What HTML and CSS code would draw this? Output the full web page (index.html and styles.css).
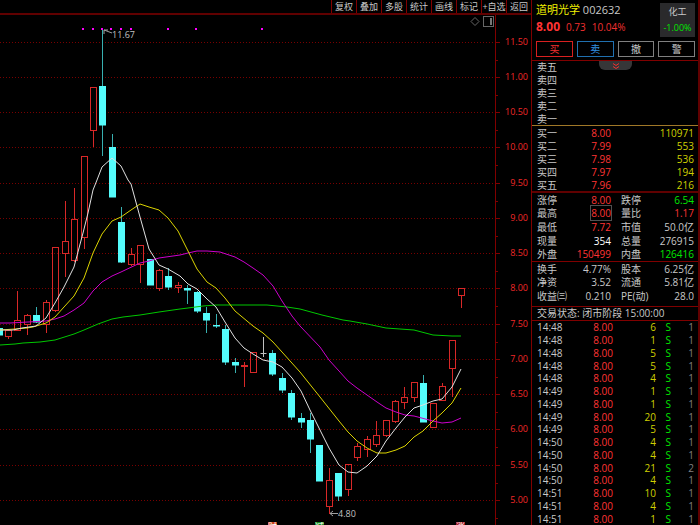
FILE: index.html
```html
<!DOCTYPE html>
<html lang="zh-CN">
<head>
    <meta charset="UTF-8">
    <meta name="viewport" content="width=device-width, initial-scale=1.0">
    <title>道明光学 002632</title>
    <link rel="stylesheet" href="styles.css">
</head>
<body>
    <main class="chart-pane">
        <nav class="toolbar">
            <button>复权</button>
            <button>叠加</button>
            <button>多股</button>
            <button>统计</button>
            <button>画线</button>
            <button>标记</button>
            <button>+自选</button>
            <button>返回</button>
        </nav>
        <svg id="chart" class="chart" viewBox="0 15 531 510" preserveAspectRatio="xMinYMin meet">
            <g id="grid"></g>
            <g id="candles"></g>
            <g id="averages"></g>
            <g id="signals"></g>

            <path class="pointer" d="M104 30l8 3M104 30v4M104 30l4 0"/>
            <text class="mark" x="112" y="38">11.67</text>
            <path class="pointer" d="M330 513.500h8M333 511l-3 2.500l3 2.500"/>
            <text class="mark" x="338" y="517">4.80</text>

            <g class="tags">
                <rect x="268" y="522" width="9" height="9" fill="#c8401c"/>
                <text x="268" y="530">财</text>
                <rect x="315" y="522" width="9" height="9" fill="#128a20"/>
                <text x="315" y="530">减</text>
                <rect x="456" y="522" width="9" height="9" fill="#a01420"/>
                <text x="456" y="530">涨</text>
            </g>

            <path class="tool-icon" d="M475 17.500l4 4l-4 4l-4-4z"/>
            <rect class="tool-icon" x="483.500" y="16.500" width="10" height="10"/>
            <rect x="490" y="18" width="2" height="7" fill="#777"/>
        </svg>
    </main>

    <aside class="quote">
        <header class="quote-head">
            <div>
                <h1><span class="name">道明光学</span> 002632</h1>
                <p class="price"><b>8.00</b><span>0.73</span><span>10.04%</span></p>
            </div>
            <div class="sector">
                <span>化工</span>
                <span class="green">-1.00%</span>
            </div>
        </header>
        <div class="actions">
            <button class="buy">买</button>
            <button class="sell">卖</button>
            <button>撤</button>
            <button>警</button>
        </div>

        <section class="block asks">
            <button class="pull" aria-label="展开">
                <svg viewBox="0 0 8 6" width="8" height="6"><path d="M1 .5l3 2l3-2M1 3.500l3 2l3-2"/></svg>
            </button>
            <table>
                <tr><th>卖五</th><td></td><td></td></tr>
                <tr><th>卖四</th><td></td><td></td></tr>
                <tr><th>卖三</th><td></td><td></td></tr>
                <tr><th>卖二</th><td></td><td></td></tr>
                <tr><th>卖一</th><td></td><td></td></tr>
            </table>
        </section>

        <section class="block bids">
            <table>
                <tr><th>买一</th><td class="red">8.00</td><td class="yellow">110971</td></tr>
                <tr><th>买二</th><td class="red">7.99</td><td class="yellow">553</td></tr>
                <tr><th>买三</th><td class="red">7.98</td><td class="yellow">536</td></tr>
                <tr><th>买四</th><td class="red">7.97</td><td class="yellow">194</td></tr>
                <tr><th>买五</th><td class="red">7.96</td><td class="yellow">216</td></tr>
            </table>
        </section>

        <section class="block stats">
            <table>
                <tr><th>涨停</th><td class="red">8.00</td><th>跌停</th><td class="green">6.54</td></tr>
                <tr><th>最高</th><td class="red"><span class="boxed">8.00</span></td><th>量比</th><td class="red">1.17</td></tr>
                <tr><th>最低</th><td class="red">7.72</td><th>市值</th><td>50.0亿</td></tr>
                <tr><th>现量</th><td class="white">354</td><th>总量</th><td>276915</td></tr>
                <tr><th>外盘</th><td class="red">150499</td><th>内盘</th><td class="green">126416</td></tr>
            </table>
        </section>

        <section class="block basics">
            <table>
                <tr><th>换手</th><td>4.77%</td><th>股本</th><td>6.25亿</td></tr>
                <tr><th>净资</th><td>3.52</td><th>流通</th><td>5.81亿</td></tr>
                <tr><th>收益㈢</th><td>0.210</td><th>PE(动)</th><td>28.0</td></tr>
            </table>
        </section>

        <p class="block status">交易状态: 闭市阶段 15:00:00</p>

        <section class="block tape">
            <table>
                <tbody id="tape"></tbody>
            </table>
        </section>
    </aside>

    <script src="chart.js"></script>
</body>
</html>
```

FILE: styles.css
```css
* {
    box-sizing: border-box;
    margin: 0;
    padding: 0;
}
body {
    display: flex;
    height: 100vh;
    overflow: hidden;
    background-color: #000;
    color: #c8c8c8;
    font-family: "Open Sans", "Noto Sans CJK SC", sans-serif;
    font-size: 10px;
    line-height: 12px;
}
button {
    background: none;
    border: none;
    color: inherit;
    font: inherit;
    cursor: pointer;
}
.red {
    color: #ff3434;
}
.green {
    color: #00e600;
}
.yellow {
    color: #d0d000;
}
.white {
    color: #fff;
}

/* chart side */
.chart-pane {
    flex: 1;
    min-width: 0;
    display: flex;
    flex-direction: column;
}
.toolbar {
    display: flex;
    justify-content: flex-end;
    height: 15px;
    border-bottom: 2px solid #600000;
}
.toolbar button {
    width: 25px;
    border-left: 1px solid #800000;
    font-size: 9px;
    line-height: 12px;
    white-space: nowrap;
}
.chart {
    display: block;
    flex: 1;
    min-height: 0;
    width: 100%;
}
.grid-line {
    stroke: #780000;
    stroke-dasharray: 1 2;
}
.axis {
    stroke: #800000;
}
.axis-label {
    fill: #f02828;
    font-size: 9px;
    text-anchor: end;
}
.up {
    fill: none;
    stroke: #d82828;
}
.down {
    fill: #54fcfc;
    stroke: none;
}
.down-wick {
    stroke: #38b0b0;
}
.flat {
    stroke: #c0c0c0;
}
.average {
    fill: none;
    stroke-width: 1;
}
.signal {
    fill: #f0f;
}
.pointer {
    fill: none;
    stroke: #a0a0a0;
}
.mark {
    fill: #c0c0c0;
    font-size: 9px;
}
.tags text {
    fill: #fff;
    font-size: 9px;
}
.tool-icon {
    fill: none;
    stroke: #666;
}

/* quote side */
.quote {
    flex: 0 0 169px;
    border-left: 1px solid #800000;
    border-right: 2px solid #600000;
}
.quote-head {
    display: flex;
    justify-content: space-between;
    height: 40px;
    padding: 3px 3px 0 4px;
}
h1 {
    font-size: 11px;
    font-weight: normal;
    line-height: 14px;
    white-space: nowrap;
}
.name {
    color: #f0f000;
}
.price {
    display: flex;
    align-items: baseline;
    gap: 6px;
    margin-top: 3px;
    color: #f03030;
    line-height: 14px;
}
.price b {
    color: #ff3434;
    font-size: 12px;
}
.sector {
    display: flex;
    flex-direction: column;
    justify-content: space-between;
    width: 35px;
    height: 34px;
    padding: 3px 0;
    background-color: #2a2a2c;
    font-size: 9px;
    text-align: center;
}
.actions {
    display: flex;
    gap: 4px;
    height: 20px;
    padding: 1px 3px 3px 4px;
}
.actions button {
    flex: 1;
    border: 1px solid #808080;
    line-height: 12px;
}
.actions .buy {
    border-color: #d82020;
    color: #f03030;
}
.actions .sell {
    border-color: #2070b0;
    color: #3090e0;
}
.block {
    padding: 0 4px 0 5px;
    border-top: 1px solid #800000;
}
table {
    width: 100%;
    border-collapse: collapse;
    table-layout: fixed;
}
th {
    width: 33px;
    font-weight: normal;
    text-align: left;
    white-space: nowrap;
}
td {
    text-align: right;
    white-space: nowrap;
}
td:nth-child(2) {
    width: 41px;
}
.asks {
    position: relative;
}
.asks table {
    height: 64px;
}
.pull {
    position: absolute;
    top: 0;
    left: 50%;
    width: 33px;
    height: 9px;
    margin-left: -16px;
    border-radius: 0 0 6px 6px;
    background-color: #363638;
    line-height: 0;
}
.pull path {
    fill: none;
    stroke: #f03030;
}
.bids {
    border-top-color: #a07828;
}
.bids table {
    height: 65px;
}
.stats {
    border-top: 2px solid #600000;
}
.stats table {
    height: 68px;
}
.basics {
    padding-bottom: 3px;
}
.basics table {
    height: 41px;
}
th:nth-child(3) {
    width: 42px;
    padding-left: 10px;
}
.boxed {
    outline: 1px solid #505050;
}
.status {
    line-height: 13px;
}
.tape table {
    height: 204px;
}
.tape th {
    width: 35px;
}
.tape td:nth-child(3) {
    width: 43px;
}
.tape td:nth-child(4) {
    width: 15px;
}
.tape td:nth-child(5) {
    color: #808080;
}
```

FILE: chart.js
```js
const svg = document.getElementById('chart');
const STEP = 9.4375;

// kind, high, body top, body bottom, low
const candles = [
    ['d', 328, 328, 335, 335], ['u', 330, 330, 336, 339], ['u', 291, 320, 330, 330],
    ['u', 314, 315, 324, 335], ['d', 307, 315, 322, 323], ['u', 300, 302, 324, 333],
    ['u', 247, 247, 310, 312], ['u', 201, 241, 253, 277], ['u', 188, 219, 260, 262],
    ['u', 156, 156, 237, 249], ['u', 87, 87, 130, 147], ['d', 30, 86, 125, 156],
    ['d', 134, 147, 197, 197], ['d', 207, 222, 262, 263], ['u', 248, 254, 264, 266],
    ['u', 245, 245, 264, 283], ['d', 259, 259, 285, 285], ['u', 269, 270, 288, 291],
    ['d', 268, 276, 287, 290], ['u', 282, 285, 287, 293], ['d', 285, 288, 290, 304],
    ['d', 291, 292, 311, 313], ['d', 307, 313, 320, 333], ['d', 314, 325, 326, 328],
    ['d', 325, 329, 362, 365], ['d', 358, 362, 365, 373], ['u', 362, 365, 366, 387],
    ['u', 352, 352, 372, 372], ['f', 337, 353, 353, 357], ['d', 350, 353, 374, 376],
    ['d', 373, 378, 390, 393], ['d', 390, 393, 417, 420], ['d', 413, 418, 422, 428],
    ['d', 413, 420, 439, 453], ['d', 445, 445, 481, 481], ['u', 468, 480, 506, 514],
    ['d', 473, 473, 496, 501], ['u', 464, 464, 489, 496], ['u', 443, 446, 457, 461],
    ['u', 436, 439, 449, 457], ['u', 421, 435, 444, 447], ['u', 420, 420, 435, 437],
    ['u', 400, 401, 421, 423], ['u', 387, 397, 402, 409], ['u', 382, 382, 397, 402],
    ['d', 375, 383, 422, 422], ['u', 403, 403, 427, 427], ['u', 383, 386, 400, 401],
    ['u', 340, 340, 368, 397], ['u', 288, 288, 295, 308]
];

const averages = {
    '#00c800': '0,345 15,344 23,343 40,342 55,340 74,334 84,330 98,324 112,319 123,317 140,315 159,312 180,309 188,308 203,306 216,305 267,305 287,307 300,309 322,315 343,320 350,321 367,324 386,328 414,330 433,335 452,336 461,336',
    '#cc00cc': '0,323 10,323 46,321 55,319 64,316 74,310 84,303 93,291 102,282 112,276 121,272 140,263 149,261 159,258 180,255 188,253 197,251 207,251 220,252 235,257 244,262 253,268 263,275 273,286 282,301 292,316 300,326 320,347 329,360 339,371 348,381 357,388 367,395 377,402 386,408 396,412 405,415 414,416 433,421 442,423 452,422 461,418',
    '#dcd400': '0,330 15,329 27,328 33,327 46,323 55,317 64,307 74,296 84,278 93,253 102,234 112,221 121,217 131,210 140,204 149,207 159,210 168,218 178,231 188,251 197,269 207,282 216,288 225,298 235,311 253,326 263,333 273,342 282,352 300,372 320,397 339,421 348,432 357,441 367,448 377,453 386,453 396,450 405,446 414,437 423,431 433,421 442,413 452,403 461,388',
    '#e0e0e0': '0,330 13,330 22,328 36,326 46,318 55,303 64,287 74,267 83,233 88,213 93,190 97,180 102,167 112,158 121,166 128,180 131,184 140,217 149,249 159,265 168,269 180,276 188,284 197,289 207,299 216,307 225,322 235,338 244,348 253,354 263,360 273,362 282,367 292,378 301,391 310,410 320,430 329,448 339,465 348,472 357,473 367,466 377,456 386,441 396,428 405,417 414,408 423,405 433,401 442,399 452,387 461,369'
};

const ticks = [
    ['14:48', 6, 1], ['14:48', 1, 1], ['14:48', 5, 1], ['14:48', 5, 1],
    ['14:48', 4, 1], ['14:49', 1, 1], ['14:49', 1, 1], ['14:49', 20, 1],
    ['14:49', 5, 1], ['14:50', 4, 1], ['14:50', 4, 1], ['14:50', 21, 2],
    ['14:50', 4, 1], ['14:51', 10, 1], ['14:51', 4, 1], ['14:51', 1, 1]
];

function add(parent, tag, attrs, text) {
    const el = document.createElementNS('http://www.w3.org/2000/svg', tag);
    for (const key in attrs) el.setAttribute(key, attrs[key]);
    if (text) el.textContent = text;
    parent.appendChild(el);
}

function line(parent, cls, x1, y1, x2, y2) {
    add(parent, 'line', { class: cls, x1, y1, x2, y2 });
}

// price grid, 0.50 per line
const grid = svg.querySelector('#grid');
line(grid, 'axis', 495.5, 15, 495.5, 525);
for (let i = 0; i < 14; i++) {
    const row = Math.floor(42.3 + i * 35.23);
    const y = row + 0.5;
    line(grid, 'grid-line', 0, y, 495, y);
    line(grid, 'axis', 495, y, 500, y);
    line(grid, 'axis', 495, y + 18, 498, y + 18);
    add(grid, 'text', { class: 'axis-label', x: 528, y: row + 3 }, (11.5 - i * 0.5).toFixed(2));
}

const layer = svg.querySelector('#candles');
candles.forEach(([kind, high, top, bottom, low], i) => {
    const x = Math.floor(8.5 + (i - 1) * STEP) + 0.5;
    if (kind === 'u') {
        line(layer, 'up', x, high, x, top);
        line(layer, 'up', x, bottom, x, low);
        add(layer, 'rect', { class: 'up', x: x - 3, y: top + 0.5, width: 6, height: bottom - top });
    } else if (kind === 'd') {
        line(layer, 'down-wick', x, high, x, low);
        add(layer, 'rect', { class: 'down', x: x - 3.5, y: top, width: 7, height: bottom - top + 0.5 });
    } else {
        line(layer, 'flat', x, high, x, low);
        line(layer, 'flat', x - 3, top + 0.5, x + 3, top + 0.5);
    }
});

for (const color in averages) {
    add(svg.querySelector('#averages'), 'polyline', { class: 'average', points: averages[color], stroke: color });
}

[82, 92, 101, 110, 120, 130, 167, 195, 261].forEach(x => {
    add(svg.querySelector('#signals'), 'rect', { class: 'signal', x, y: 28, width: 2, height: 2 });
});

document.getElementById('tape').innerHTML = ticks.map(([time, volume, count]) =>
    `<tr><th>${time}</th><td class="red">8.00</td><td class="yellow">${volume}</td><td class="green">S</td><td>${count}</td></tr>`
).join('');
```
